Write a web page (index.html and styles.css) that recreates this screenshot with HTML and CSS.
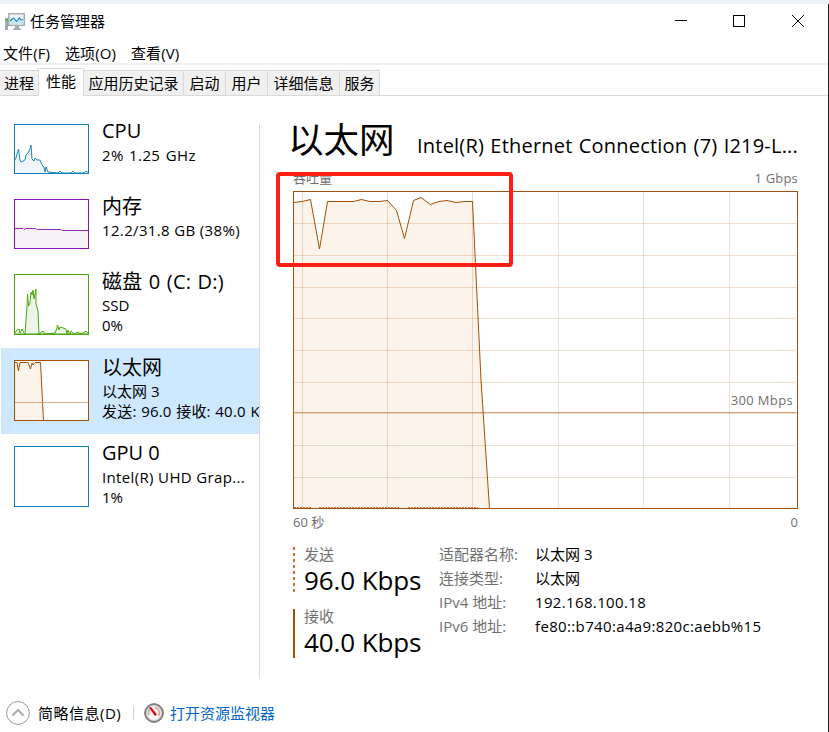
FILE: index.html
```html
<!DOCTYPE html>
<html lang="zh-CN">
<head>
<meta charset="utf-8">
<title>任务管理器</title>
<link rel="stylesheet" href="styles.css">
</head>
<body>
<div class="strip"></div>
<main class="window">
  <header class="titlebar">
    <svg class="app-icon" width="21" height="18" viewBox="0 0 21 18">
      <rect x="0" y="5" width="3" height="12" fill="#a4a7a9"/><rect x="1" y="6" width="2" height="2" fill="#35c52b"/>
      <rect x="3.700" y=".7" width="15.600" height="11.600" fill="#e9f5fc" stroke="#a9adaf" stroke-width="1.500"/>
      <path d="M5 8l3-3 3 3.500 3-4.500 2 3 2-1V11.500H5z" fill="#c3e5f7"/>
      <path d="M5 8L8.500 5l3 3.500 3-3.500 1.500 2 2-.5" fill="none" stroke="#267eb5" stroke-width="1.100"/>
      <path d="M10 13h4v2l3 2H7l3-2z" fill="#a5a9ac"/>
    </svg>
    <span class="app-name">任务管理器</span>
    <svg class="controls" width="130" height="14" viewBox="0 0 130 14" fill="none" stroke="#000">
      <path d="M0 6.500h12"/><rect x="58.500" y="1.500" width="11" height="11"/><path d="M117 1l12 12M129 1l-12 12"/>
    </svg>
  </header>
  <nav class="menu"><span class="m1">文件(F)</span><span class="m2">选项(O)</span><span>查看(V)</span></nav>
  <nav class="tabs">
    <span class="tab t1">进程</span><span class="tab active">性能</span><span class="tab t3">应用历史记录</span><span class="tab t4">启动</span><span class="tab t4">用户</span><span class="tab t6">详细信息</span><span class="tab t7">服务</span><span class="tab-rest"></span>
  </nav>
  <section class="content">
    <aside class="list">
      <div class="item">
        <svg class="thumb" width="75" height="50" viewBox="0 0 75 50">
          <path d="M0 37L2 34 3 30 4.500 25 6 36 7 38 11 36 12 31 14 29 16 25 17 21 18 35 20 37 21 34 23 36 26 36 28 41 30 43 31 48 32 43 34 48 44 49 46 47 48 49 57 49 59 47 61 49 70 49 72 47 75 49V50H0z" fill="#f0f5fa" stroke="#1c87b9"/>
          <rect x=".5" y=".5" width="74" height="49" fill="none" stroke="#117dbb"/>
        </svg>
        <div class="text"><h2>CPU</h2><p class="cpu">2% 1.25 GHz</p></div>
      </div>
      <div class="item">
        <svg class="thumb" width="75" height="50" viewBox="0 0 75 50">
          <path d="M0 29.500H9L10 30.500 12 29.500H22L23 30.500H47L48 31.500H75V50H0z" fill="#f4f2f4" stroke="#9528b4"/>
          <rect x=".5" y=".5" width="74" height="49" fill="none" stroke="#8b12ae"/>
        </svg>
        <div class="text"><h2 class="cjk">内存</h2><p>12.2/31.8 GB (38%)</p></div>
      </div>
      <div class="item tall">
        <svg class="thumb" width="75" height="61" viewBox="0 0 75 61">
          <path d="M0 60L3 56 5 55 6 59 8 55 10 59 11 60 13 33 13.500 20 14.500 32 16 29 17 18 18 21 19 16 20 25 22 15 22 30 24 37 25 60 29 57 31 60 41 59 43 54 43.500 51 45 56 46 53 49 54 52 55 53 60 54 56 56 60 57 57 60 60 64 58 67 60 72 57 75 60z" fill="#edf5e9" stroke="#4da60c"/>
          <rect x=".5" y=".5" width="74" height="60" fill="none" stroke="#4da60c"/>
        </svg>
        <div class="text"><h2 class="cjk disk">磁盘 0 (C: D:)</h2><p class="plain">SSD</p><p class="plain">0%</p></div>
      </div>
      <div class="item tall selected">
        <svg class="thumb" width="75" height="61" viewBox="0 0 75 61">
          <rect width="75" height="61" fill="#fff"/>
          <path d="M0 2.500H3L4.500 11 6 2.500H14L16.500 9 18 3 19 5 21 2.500H26.500L29.500 61H0z" fill="#fcf3eb" stroke="#a74f01"/>
          <path d="M0 42.500H75" stroke="#d8ae87"/>
          <rect x=".5" y=".5" width="74" height="60" fill="none" stroke="#a74f01"/>
        </svg>
        <div class="text"><h2 class="cjk">以太网</h2><p class="plain">以太网 3</p><p class="rates">发送: 96.0 接收: 40.0 Kbps</p></div>
      </div>
      <div class="item tall">
        <svg class="thumb" width="75" height="61" viewBox="0 0 75 61"><rect x=".5" y=".5" width="74" height="60" fill="#fff" stroke="#117dbb"/></svg>
        <div class="text"><h2>GPU 0</h2><p>Intel(R) UHD Grap...</p><p class="plain">1%</p></div>
      </div>
    </aside>
    <section class="detail">
      <div class="heading"><h1>以太网</h1><span class="device">Intel(R) Ethernet Connection (7) I219-L...</span></div>
      <div class="axis"><span>吞吐量</span><span class="gb">1 Gbps</span></div>
      <div class="chart">
        <svg width="505" height="318" viewBox="293 191 505 318">
          <path d="M293.500 202.500L302 201.500 310.500 199.500 319.500 249 327.500 201.500H353.500L361.500 199.500 370 201.500H379L387.500 200.500 396.500 210.500 404.500 238.500 413.500 200.500 421 197.500 430.500 204.500 439 201.500 447 200.500 456 202.500 464 201.500H472.500L481 380 489.500 508.500H293.500z" fill="#fcf3eb"/>
          <path d="M302.500 192V508M387.500 192V508M472.500 192V508M558.500 192V508M643.500 192V508M729.500 192V508M294 223.500H796M294 255.500H796M294 287.500H796M294 318.500H796M294 350.500H796M294 382.500H796M294 413.500H796M294 445.500H796M294 477.500H796" stroke="#a74f01" stroke-opacity=".19"/>
          <path d="M294 412.500H797" stroke="#d5a173"/>
          <path d="M294 507.500H312M319 507.500H400M408 507.500H478" stroke="#d96b35" stroke-dasharray="2 1"/>
          <path d="M293.500 202.500L302 201.500 310.500 199.500 319.500 249 327.500 201.500H353.500L361.500 199.500 370 201.500H379L387.500 200.500 396.500 210.500 404.500 238.500 413.500 200.500 421 197.500 430.500 204.500 439 201.500 447 200.500 456 202.500 464 201.500H472.500L481 380 489.500 508.500" fill="none" stroke="#a74f01"/>
          <rect x="293.500" y="191.500" width="504" height="317" fill="none" stroke="#a05214"/>
        </svg>
        <span class="limit">300 Mbps</span>
        <div class="highlight"></div>
      </div>
      <div class="axis bottom"><span>60 秒</span><span>0</span></div>
      <div class="stats">
        <div class="speeds">
          <div class="speed sent"><label>发送</label><b>96.0 Kbps</b></div>
          <div class="speed recv"><label>接收</label><b>40.0 Kbps</b></div>
        </div>
        <dl class="info">
          <dt>适配器名称:</dt><dd class="plain">以太网 3</dd>
          <dt>连接类型:</dt><dd class="plain">以太网</dd>
          <dt>IPv4 地址:</dt><dd>192.168.100.18</dd>
          <dt>IPv6 地址:</dt><dd>fe80::b740:a4a9:820c:aebb%15</dd>
        </dl>
      </div>
    </section>
  </section>
  <footer class="footer">
    <svg width="24" height="24" viewBox="0 0 24 24" fill="none"><circle cx="12" cy="12" r="11.400" stroke="#999"/><path d="M6.500 14.500L12 9l5.500 5.500" stroke="#aaa" stroke-width="2"/></svg>
    <span class="brief">简略信息(D)</span>
    <span class="sep"></span>
    <svg width="20" height="20" viewBox="0 0 20 20"><circle cx="10" cy="10" r="9.300" fill="#8f9193" stroke="#68696b"/><circle cx="10" cy="10" r="7.500" fill="#f4f4f4" stroke="#d0d0d0"/><path d="M5 12a5.500 5.500 0 0 1 1-6M11 4.500a5.500 5.500 0 0 1 3.500 8.500" fill="none" stroke="#d8a48c" stroke-width="1.500"/><path d="M4.500 4L7.500 4.500 13 11.500 11 13z" fill="#d40f0f"/></svg>
    <span class="link">打开资源监视器</span>
  </footer>
</main>
</body>
</html>
```
FILE: styles.css
```css
* { box-sizing: border-box; }
body { margin: 0; height: 732px; overflow: hidden; background: #fff; color: #000; font: 15px/20px "Open Sans", "Noto Sans CJK SC", sans-serif; }
h1, h2, p, dl, dd { margin: 0; font-weight: 400; white-space: nowrap; }
svg { display: block; flex: none; }
span { white-space: nowrap; }
.strip { height: 4px; background: #ebf4fa; }
.window { display: flex; flex-direction: column; height: 728px; border-right: 1px solid #202020; }
.window > * { flex: none; }
.titlebar { display: flex; height: 36px; padding: 9px 23px 0 5px; }
.app-name { margin-left: 4px; line-height: 16px; }
.controls { margin-left: auto; margin-top: 1px; }
.menu { display: flex; height: 25px; padding: 3px 0 0 3px; border-bottom: 2px solid #f0f0f0; letter-spacing: .1px; }
.m1 { width: 62px; }
.m2 { width: 66px; }
.tabs { display: flex; align-items: flex-end; height: 31px; padding-top: 3px; }
.tab { height: 26px; border: solid #d9d9d9; border-width: 1px 1px 1px 0; background: #f0f0f0; text-align: center; line-height: 24px; }
.t1 { width: 38px; border-right: 0; }
.active { width: 46px; height: 28px; border-width: 1px 1px 0; background: #fff; }
.t3 { width: 100px; }
.t4 { width: 42px; }
.t6 { width: 72px; }
.t7 { width: 40px; }
.tab-rest { flex: 1; height: 26px; border-bottom: 1px solid #d9d9d9; }
.content { display: flex; height: 582px; }
.list { width: 260px; height: 582px; padding-top: 16px; background: linear-gradient(#d9d9d9, #d9d9d9) 259px 28px / 1px 554px no-repeat; }
.item { display: flex; width: 258px; height: 75px; margin-left: 1px; padding: 5px 0 0 13px; overflow: hidden; }
.tall { height: 86px; }
.selected { background: #cde8ff; }
.thumb { margin-top: 7px; }
.text { margin-left: 13px; }
.text p, dd { letter-spacing: .35px; }
.text p.cpu { letter-spacing: .4px; word-spacing: 1px; }
.text p.rates { letter-spacing: .2px; word-spacing: .5px; }
.text p.plain, dd.plain { letter-spacing: 0; }
h2 { font-size: 20px; line-height: 28px; }
h2.cjk { height: 28px; line-height: 30px; }
h2.disk { letter-spacing: .2px; word-spacing: 1px; }
.detail { flex: 1; padding: 19px 30px 0 33px; }
.heading { display: flex; align-items: baseline; justify-content: space-between; height: 54px; }
h1 { font-size: 35.5px; line-height: 48px; margin-left: -5px; }
.device { font-size: 20px; letter-spacing: .2px; word-spacing: .9px; }
.axis { display: flex; justify-content: space-between; height: 22px; color: #707070; font-size: 13px; line-height: 18px; }
.gb { letter-spacing: .2px; }
.chart { position: relative; height: 318px; }
.limit { position: absolute; right: 5px; top: 200px; color: #707070; font-size: 13px; line-height: 18px; letter-spacing: .35px; }
.highlight { position: absolute; left: -17px; top: -19px; width: 237px; height: 95px; border: 4px solid #ff2014; border-radius: 4px; }
.bottom { height: 33px; padding-top: 4px; }
.stats { display: flex; }
.speeds { width: 146px; }
.speed { height: 62px; padding-left: 11px; }
.speed label { display: block; height: 24px; line-height: 24px; color: #707070; }
.speed b { display: block; font-weight: 400; font-size: 26px; line-height: 28px; letter-spacing: -.1px; white-space: nowrap; }
.sent { background: repeating-linear-gradient(#d96b35 0 3px, transparent 3px 6px) 0 5px / 2px 45px no-repeat; }
.recv { background: linear-gradient(#a74f01, #a74f01) 0 5px / 2px 49px no-repeat; }
.info { display: grid; grid-template-columns: 96px auto; line-height: 24px; align-content: start; }
dt { color: #707070; white-space: nowrap; }
.footer { display: flex; align-items: center; height: 39px; padding-left: 6px; margin-top: 15px; }
.brief { width: 86px; margin-left: 8px; letter-spacing: .5px; }
.sep { width: 1px; height: 14px; margin: 0 10px 0 9px; background: #d0d0d0; }
.link { margin-left: 6px; color: #0066cc; }
```
